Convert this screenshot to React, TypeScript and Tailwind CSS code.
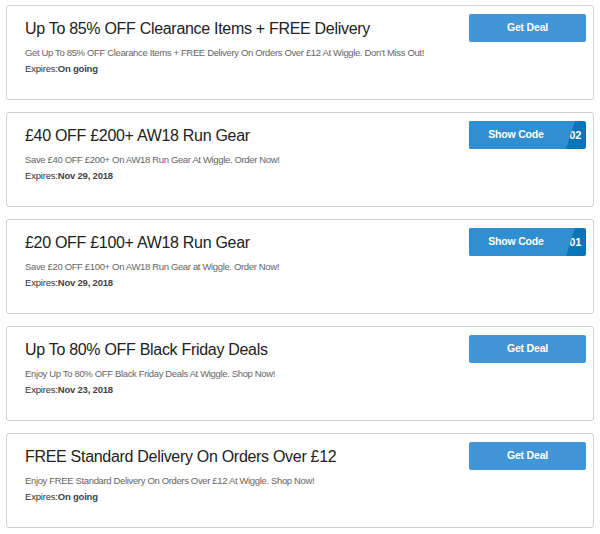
type Offer = {
  title: string;
  desc: string;
  expires: string;
  code?: string;
};

const offers: Offer[] = [
  {
    title: "Up To 85% OFF Clearance Items + FREE Delivery",
    desc: "Get Up To 85% OFF Clearance Items + FREE Delivery On Orders Over £12 At Wiggle. Don't Miss Out!",
    expires: "On going",
  },
  {
    title: "£40 OFF £200+ AW18 Run Gear",
    desc: "Save £40 OFF £200+ On AW18 Run Gear At Wiggle. Order Now!",
    expires: "Nov 29, 2018",
    code: "RUN40AW02",
  },
  {
    title: "£20 OFF £100+ AW18 Run Gear",
    desc: "Save £20 OFF £100+ On AW18 Run Gear at Wiggle. Order Now!",
    expires: "Nov 29, 2018",
    code: "RUN20AW01",
  },
  {
    title: "Up To 80% OFF Black Friday Deals",
    desc: "Enjoy Up To 80% OFF Black Friday Deals At Wiggle. Shop Now!",
    expires: "Nov 23, 2018",
  },
  {
    title: "FREE Standard Delivery On Orders Over £12",
    desc: "Enjoy FREE Standard Delivery On Orders Over £12 At Wiggle. Shop Now!",
    expires: "On going",
  },
];

// code sits under the button, the slanted edge only shows its last chars
const CodeButton = ({ code }: { code: string }) => (
  <div className="relative h-[28px] w-[117px] overflow-hidden rounded-[2px] bg-[#0b76b5]">
    <span className="absolute right-[5px] top-0 flex h-full items-center text-[11px] font-bold tracking-[-0.3px] text-white">
      {code}
    </span>
    <div className="absolute inset-y-0 left-0 flex w-[106px] items-center justify-center bg-[#2f8fd1] pr-[12px] text-[10.5px] font-bold tracking-[-0.2px] text-white [clip-path:polygon(0_0,100%_0,calc(100%-9px)_100%,0_100%)]">
      Show Code
    </div>
  </div>
);

const DealButton = () => (
  <div className="flex h-[28px] w-[117px] items-center justify-center rounded-[2px] bg-[#4096d9] text-[10.5px] font-bold tracking-[-0.2px] text-white">
    Get Deal
  </div>
);

const OfferCard = ({ offer }: { offer: Offer }) => (
  <div className="flex h-[95px] rounded-[3px] border border-[#d0d0d0] bg-white pl-[18px] pr-[7px] pt-[8px]">
    <div className="flex-1 pt-[3px]">
      <h2 className="text-[16px] leading-[24px] tracking-[-0.3px] text-[#222]">{offer.title}</h2>
      <p className="mt-[6px] text-[9.5px] leading-[12px] tracking-[-0.35px] text-[#666]">{offer.desc}</p>
      <p className="mt-[4px] text-[9.5px] leading-[12px] tracking-[-0.2px] text-[#333]">
        Expires:<span className="font-bold text-[#444]">{offer.expires}</span>
      </p>
    </div>
    <div>{offer.code ? <CodeButton code={offer.code} /> : <DealButton />}</div>
  </div>
);

export default function App() {
  return (
    <div className="flex h-[534px] w-[600px] flex-col gap-[12px] bg-white px-[6px] pt-[5px] font-['Liberation_Sans',Arial,sans-serif]">
      {offers.map((o) => (
        <OfferCard key={o.title} offer={o} />
      ))}
    </div>
  );
}
